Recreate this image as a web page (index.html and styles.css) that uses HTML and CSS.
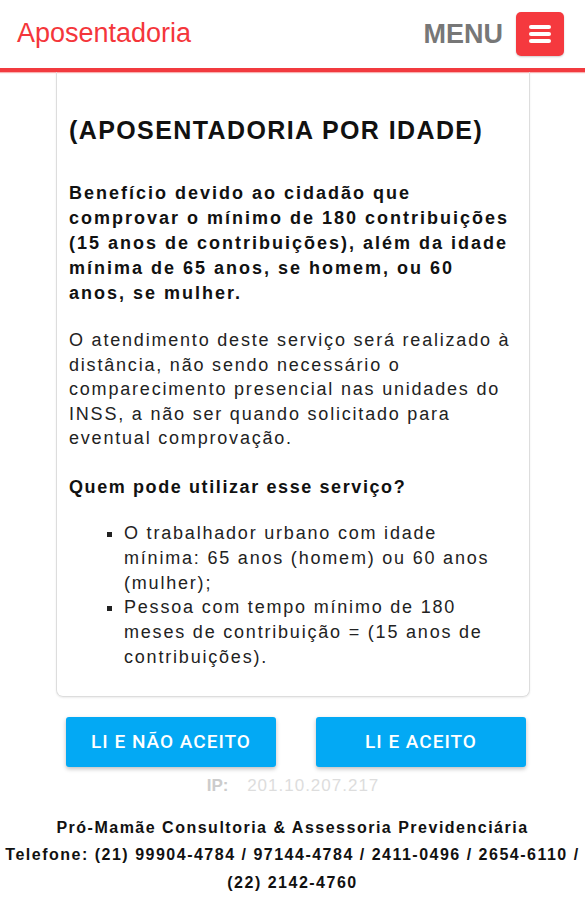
FILE: index.html
```html
<!DOCTYPE html>
<html lang="pt-BR">

<head>
    <meta charset="UTF-8">
    <meta name="viewport" content="width=device-width, initial-scale=1.0">
    <title>Aposentadoria</title>
    <link rel="stylesheet" href="styles.css">
</head>

<body>

    <header class="topbar">
        <span class="brand">Aposentadoria</span>
        <div class="menu">
            <span class="menu-label">MENU</span>
            <button class="menu-btn" aria-label="menu">
                <svg width="22" height="18" viewBox="0 0 22 18">
                    <rect x="0" y="0" width="22" height="4" rx="2" fill="#fff" />
                    <rect x="0" y="7" width="22" height="4" rx="2" fill="#fff" />
                    <rect x="0" y="14" width="22" height="4" rx="2" fill="#fff" />
                </svg>
            </button>
        </div>
    </header>

    <main class="content">
        <section class="card">
            <h1 class="title">(APOSENTADORIA POR IDADE)</h1>

            <p class="lead">Benefício devido ao cidadão que comprovar o mínimo de 180 contribuições (15 anos de
                contribuições), além da idade mínima de 65 anos, se homem, ou 60 anos, se mulher.</p>

            <p class="text">O atendimento deste serviço será realizado à distância, não sendo necessário o
                comparecimento presencial nas unidades do INSS, a não ser quando solicitado para eventual
                comprovação.</p>

            <h2 class="subtitle">Quem pode utilizar esse serviço?</h2>

            <ul class="list">
                <li>O trabalhador urbano com idade mínima: 65 anos (homem) ou 60 anos (mulher);</li>
                <li>Pessoa com tempo mínimo de 180 meses de contribuição = (15 anos de contribuições).</li>
            </ul>
        </section>

        <div class="actions">
            <button class="btn">LI E NÃO ACEITO</button>
            <button class="btn">LI E ACEITO</button>
        </div>

        <p class="ip"><b>IP:</b> <span class="ip-num">201.10.207.217</span></p>
    </main>

    <footer class="footer">
        <p>Pró-Mamãe Consultoria &amp; Assessoria Previdenciária</p>
        <p>Telefone: (21) 99904-4784 / 97144-4784 / 2411-0496 / 2654-6110 / (22) 2142-4760</p>
    </footer>

</body>

</html>
```

FILE: styles.css
```css
body {
    margin: 0;
    background: #fff;
    font-family: "Liberation Sans", Arial, sans-serif;
    color: #111;
}

/* barra do topo */
.topbar {
    height: 68px;
    display: flex;
    align-items: center;
    justify-content: space-between;
    padding: 0 21px 0 17px;
    border-bottom: 4px solid #f23a3f;
    box-shadow: 0 1px 1px rgba(240, 60, 60, 0.4);
}

.brand {
    font-size: 27px;
    color: #f4363b;
    margin-top: -2px;
}

.menu {
    display: flex;
    align-items: center;
    gap: 13px;
}

.menu-label {
    font-size: 27px;
    font-weight: bold;
    color: #777;
}

.menu-btn {
    width: 48px;
    height: 44px;
    border: none;
    border-radius: 5px;
    background: #f5393e;
    display: flex;
    align-items: center;
    justify-content: center;
    padding: 0;
    box-shadow: 0 1px 2px rgba(0, 0, 0, 0.2);
}

/* conteudo */
.content {
    padding: 0 55px 0 56px;
}

.card {
    border: 1px solid #ddd;
    border-top: none;
    border-radius: 0 0 7px 7px;
    padding: 42px 12px 26px 12px;
    box-shadow: 0 1px 2px rgba(0, 0, 0, 0.08);
}

.title {
    margin: 0 0 35px;
    font-size: 25px;
    line-height: 32px;
    letter-spacing: 1.4px;
}

.lead {
    margin: 0 0 22px;
    font-size: 18px;
    font-weight: bold;
    line-height: 25px;
    letter-spacing: 2px;
}

.text {
    margin: 0 0 24px;
    font-size: 18px;
    line-height: 24.6px;
    letter-spacing: 1.8px;
    color: #222;
}

.subtitle {
    margin: 0 0 21px;
    font-size: 18px;
    line-height: 25px;
    letter-spacing: 1.6px;
}

.list {
    margin: 0;
    padding-left: 55px;
    list-style: square;
    font-size: 18px;
    line-height: 24.8px;
    letter-spacing: 1.8px;
    color: #222;
}

.actions {
    display: flex;
    justify-content: space-between;
    padding: 20px 4px 0 10px;
}

.btn {
    width: 210px;
    height: 50px;
    border: none;
    border-radius: 3px;
    background: #03a9f4;
    color: #fff;
    font-family: Roboto, "Liberation Sans", sans-serif;
    font-size: 19px;
    font-weight: 500;
    letter-spacing: 1px;
    box-shadow: 0 2px 4px rgba(0, 0, 0, 0.25);
}

.ip {
    margin: 9px 0 0;
    text-align: center;
    font-size: 17px;
    color: #ccc;
}

.ip-num {
    color: #ddd;
    letter-spacing: 1px;
    margin-left: 14px;
}

.footer {
    margin-top: 18px;
    text-align: center;
    font-size: 16px;
    font-weight: bold;
    line-height: 27.5px;
    letter-spacing: 1.5px;
}

.footer p {
    margin: 0;
}
```
